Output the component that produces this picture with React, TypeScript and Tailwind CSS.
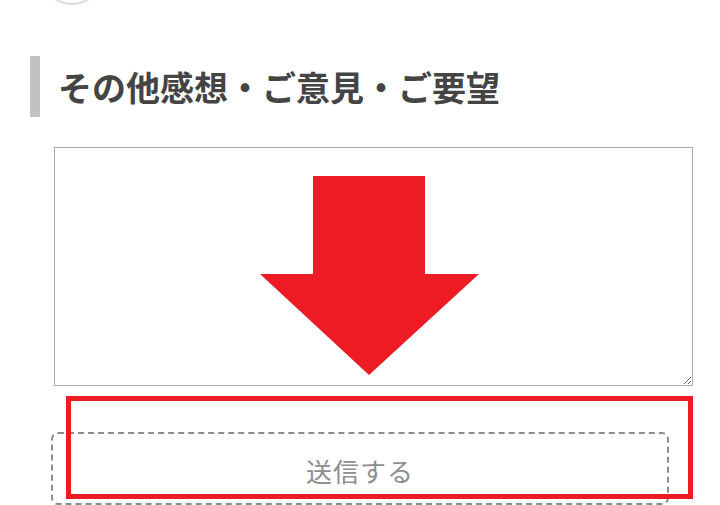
import React from "react";

const DownArrow = () => (
  <svg width="219" height="200" viewBox="0 0 219 200" className="block">
    <path d="M53 0 H165 V98 H219 L109 199 L0 98 H53 Z" fill="#ed1c24" />
  </svg>
);

const App = () => {
  return (
    <div
      className="relative w-[720px] h-[505px] overflow-hidden bg-white"
      style={{ fontFamily: '"Noto Sans CJK JP", "Noto Sans", sans-serif' }}
    >
      {/* previous item, scrolled off */}
      <div className="ml-[40px] -mt-[59px] w-[64px] h-[64px] rounded-full border-2 border-[#dddddd]" />

      <h2 className="mt-[51px] ml-[30px] h-[61px] border-l-[10px] border-[#c2c2c2] pl-[18px] flex items-center text-[34px] font-bold text-[#444444] leading-none">
        その他感想・ご意見・ご要望
      </h2>

      <div className="relative mt-[30px] ml-[54px] w-[639px] h-[239px]">
        <textarea className="block w-full h-full border border-[#aaaaaa] bg-white resize-y outline-none" />
        <div className="absolute left-[206px] top-[29px] pointer-events-none">
          <DownArrow />
        </div>
      </div>

      <div className="mt-[46px] ml-[51px] w-[618px] h-[73px] rounded-[7px] border-2 border-dashed border-[#8c8c8c] flex items-center justify-center">
        <span className="text-[26px] text-[#8e8e8e] tracking-[1px] pt-[3px]">送信する</span>
      </div>

      {/* annotation box */}
      <div className="absolute left-[66px] top-[396px] w-[627px] h-[103px] border-[5px] border-[#ed1c24] pointer-events-none" />
    </div>
  );
};

export default App;
